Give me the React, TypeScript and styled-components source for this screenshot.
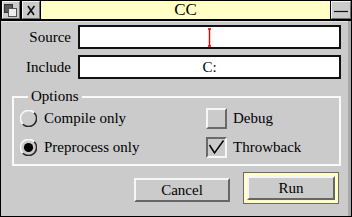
import React from "react";
import styled, { createGlobalStyle } from "styled-components";

const SERIF = `"Liberation Serif", "Times New Roman", Times, serif`;

const Global = createGlobalStyle`
  html, body { margin: 0; padding: 0; background: #cbcbcb; }
  * { box-sizing: border-box; }
  body { font-family: ${SERIF}; }
`;

const Window = styled.div`
  width: 352px;
  height: 217px;
  display: flex;
  flex-direction: column;
  font-family: ${SERIF};
  color: #000;
`;

const TitleBar = styled.div`
  height: 21px;
  background: #000;
  display: flex;
  align-items: stretch;
  padding: 1px 1px 2px 2px;
  gap: 1px;
`;

const Tool = styled.div<{ $w: number; $gapAfter?: number }>`
  width: ${(p) => p.$w}px;
  flex: none;
  background: #cbcbcb;
  border-top: 1px solid #f4f4f4;
  border-left: 1px solid #f4f4f4;
  border-right: 1px solid #6e6e6e;
  border-bottom: 1px solid #6e6e6e;
  margin-right: ${(p) => p.$gapAfter ?? 0}px;
  display: flex;
  align-items: center;
  justify-content: center;
`;

const Title = styled.div`
  flex: 1;
  background: #ffffc6;
  display: flex;
  align-items: center;
  justify-content: center;
  font-family: ${SERIF};
  font-size: 17px;
  line-height: 18px;
`;

const Body = styled.div`
  flex: 1;
  background: #cbcbcb;
  border-left: 1px solid #000;
  border-right: 1px solid #000;
  border-bottom: 1px solid #000;
  box-shadow: inset -3px 0 0 #a9a9a9, inset 0 1px 0 #e6e6e6;
  padding: 4px 0 0 0;
  display: flex;
  flex-direction: column;
`;

const FieldRow = styled.div<{ $top?: number }>`
  display: flex;
  align-items: center;
  gap: 7px;
  margin: ${(p) => p.$top ?? 0}px 10px 0 0;
  height: 24px;
`;

const Label = styled.div`
  width: 70px;
  text-align: right;
  font-family: ${SERIF};
  font-size: 15px;
`;

const Field = styled.div`
  flex: 1;
  height: 24px;
  background: #fff;
  border: 2px solid #111;
  display: flex;
  align-items: center;
  justify-content: center;
  font-family: ${SERIF};
  font-size: 15px;
`;

const Group = styled.div`
  position: relative;
  margin: 17px 10px 0 11px;
  height: 70px;
  border: 2px solid #fafafa;
  padding: 6px 6px 3px 6px;
  display: grid;
  grid-template-columns: 186px 1fr;
  grid-template-rows: 28px 28px;
  row-gap: 1px;
`;

const Legend = styled.div`
  position: absolute;
  left: 14px;
  top: -11px;
  padding: 0 3px;
  background: #cbcbcb;
  font-family: ${SERIF};
  font-size: 15px;
  line-height: 18px;
`;

const Option = styled.div<{ $gap: number }>`
  display: flex;
  align-items: center;
  gap: ${(p) => p.$gap}px;
  font-family: ${SERIF};
  font-size: 15px;
`;

const Box = styled.div<{ $in?: boolean }>`
  width: 21px;
  height: 21px;
  flex: none;
  background: #cbcbcb;
  border-style: solid;
  border-width: 2px;
  border-color: ${(p) =>
    p.$in ? "#6a6a6a #f6f6f6 #f6f6f6 #6a6a6a" : "#f6f6f6 #6a6a6a #6a6a6a #f6f6f6"};
  display: flex;
  align-items: center;
  justify-content: center;
`;

const ButtonRow = styled.div`
  display: flex;
  justify-content: flex-end;
  align-items: flex-start;
  gap: 13px;
  margin: 6px 12px 0 0;
`;

const Button = styled.div<{ $w: number; $top?: number }>`
  width: ${(p) => p.$w}px;
  height: 24px;
  margin-top: ${(p) => p.$top ?? 0}px;
  background: #cbcbcb;
  border-style: solid;
  border-width: 2px;
  border-color: #f6f6f6 #666 #666 #f6f6f6;
  display: flex;
  align-items: center;
  justify-content: center;
  font-family: ${SERIF};
  font-size: 15px;
  color: #000;
`;

const DefaultFrame = styled.div`
  border: 1px solid #6a6a6a;
  background: #ffffc6;
  padding: 3px;
`;

const BackIcon = () => (
  <svg width="16" height="15" viewBox="0 0 16 15">
    <rect x="1.5" y="1.5" width="8" height="8" fill="#5a5a5a" stroke="#333" />
    <rect x="5.5" y="5.5" width="8" height="8" fill="#eeeeee" stroke="#555" />
  </svg>
);

const CloseIcon = () => (
  <svg width="16" height="15" viewBox="0 0 16 15">
    <path d="M5 3 L11 12 M11.5 3 L4.5 12" stroke="#111" strokeWidth="1.6" fill="none" />
  </svg>
);

const ToggleIcon = () => (
  <svg width="18" height="15" viewBox="0 0 18 15">
    <path d="M2 8.5 H16" stroke="#111" strokeWidth="1.2" />
  </svg>
);

const Caret = () => (
  <svg width="5" height="19" viewBox="0 0 5 19">
    <path d="M2.5 1 V18 M1 1 H4 M1 18 H4" stroke="#e00000" strokeWidth="1.4" fill="none" />
  </svg>
);

const Radio = ({ on }: { on?: boolean }) => (
  <svg width="17" height="17" viewBox="0 0 17 17" style={{ flex: "none" }}>
    <path d="M2.8 14.2 A8 8 0 0 1 14.2 2.8" stroke="#f8f8f8" strokeWidth="1.6" fill="none" />
    <path d="M14.2 2.8 A8 8 0 0 1 2.8 14.2" stroke="#2a2a2a" strokeWidth="1.6" fill="none" />
    {on && <circle cx="8.5" cy="8.5" r="4.6" fill="#000" />}
  </svg>
);

const Tick = () => (
  <svg width="17" height="17" viewBox="0 0 17 17">
    <path d="M1.5 6 L6.5 14 L15.5 1.5" stroke="#000" strokeWidth="1.5" fill="none" />
  </svg>
);

export default function App() {
  return (
    <>
      <Global />
      <Window>
        <TitleBar>
          <Tool $w={18} $gapAfter={1}>
            <BackIcon />
          </Tool>
          <Tool $w={18}>
            <CloseIcon />
          </Tool>
          <Title>CC</Title>
          <Tool $w={20}>
            <ToggleIcon />
          </Tool>
        </TitleBar>
        <Body>
          <FieldRow>
            <Label>Source</Label>
            <Field>
              <Caret />
            </Field>
          </FieldRow>
          <FieldRow $top={6}>
            <Label>Include</Label>
            <Field>C:</Field>
          </FieldRow>
          <Group>
            <Legend>Options</Legend>
            <Option $gap={7}>
              <Radio />
              Compile only
            </Option>
            <Option $gap={6}>
              <Box />
              Debug
            </Option>
            <Option $gap={7}>
              <Radio on />
              Preprocess only
            </Option>
            <Option $gap={6}>
              <Box $in>
                <Tick />
              </Box>
              Throwback
            </Option>
          </Group>
          <ButtonRow>
            <Button $w={96} $top={6}>Cancel</Button>
            <DefaultFrame>
              <Button $w={88}>Run</Button>
            </DefaultFrame>
          </ButtonRow>
        </Body>
      </Window>
    </>
  );
}
